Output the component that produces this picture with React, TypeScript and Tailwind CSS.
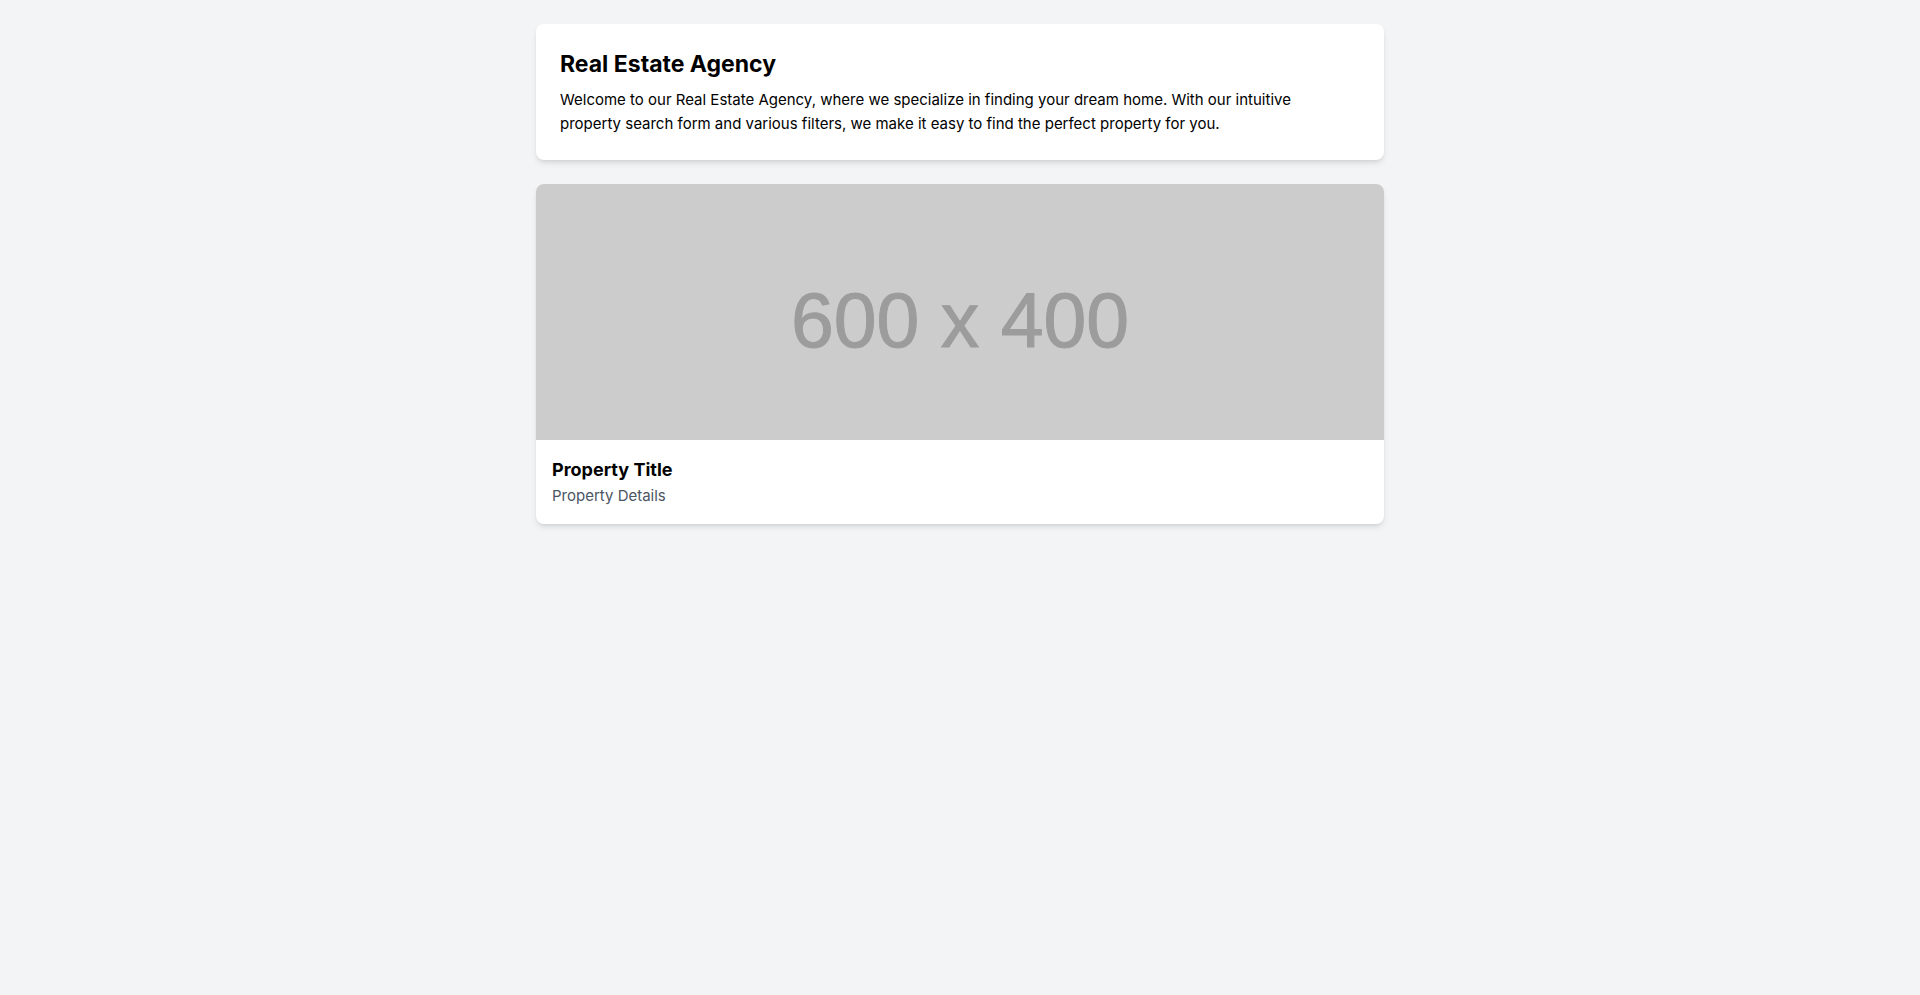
export default function App() {
  return (
    <div className="min-h-screen bg-[#f3f4f6] font-['Inter',sans-serif] text-black">
      <main className="mx-auto max-w-4xl p-6">
        <section className="mb-6 rounded-lg bg-white p-6 shadow-md">
          <h1 className="mb-2 text-[23px] leading-8 font-bold">Real Estate Agency</h1>
          <p className="max-w-3xl text-[15px] leading-6">
            Welcome to our Real Estate Agency, where we specialize in finding your dream home. With our intuitive
            property search form and various filters, we make it easy to find the perfect property for you.
          </p>
        </section>
        <article className="overflow-hidden rounded-lg bg-white shadow-md">
          <div className="flex h-64 items-center justify-center bg-[#cccccc] pt-4">
            <span className="font-['Liberation_Sans',sans-serif] text-[77px] leading-none text-[#9c9c9c] [-webkit-text-stroke:1px_#9c9c9c]">
              600 x 400
            </span>
          </div>
          <div className="p-4">
            <h2 className="text-lg font-bold">Property Title</h2>
            <p className="text-[15px] leading-6 text-[#4b5563]">Property Details</p>
          </div>
        </article>
      </main>
    </div>
  );
}
